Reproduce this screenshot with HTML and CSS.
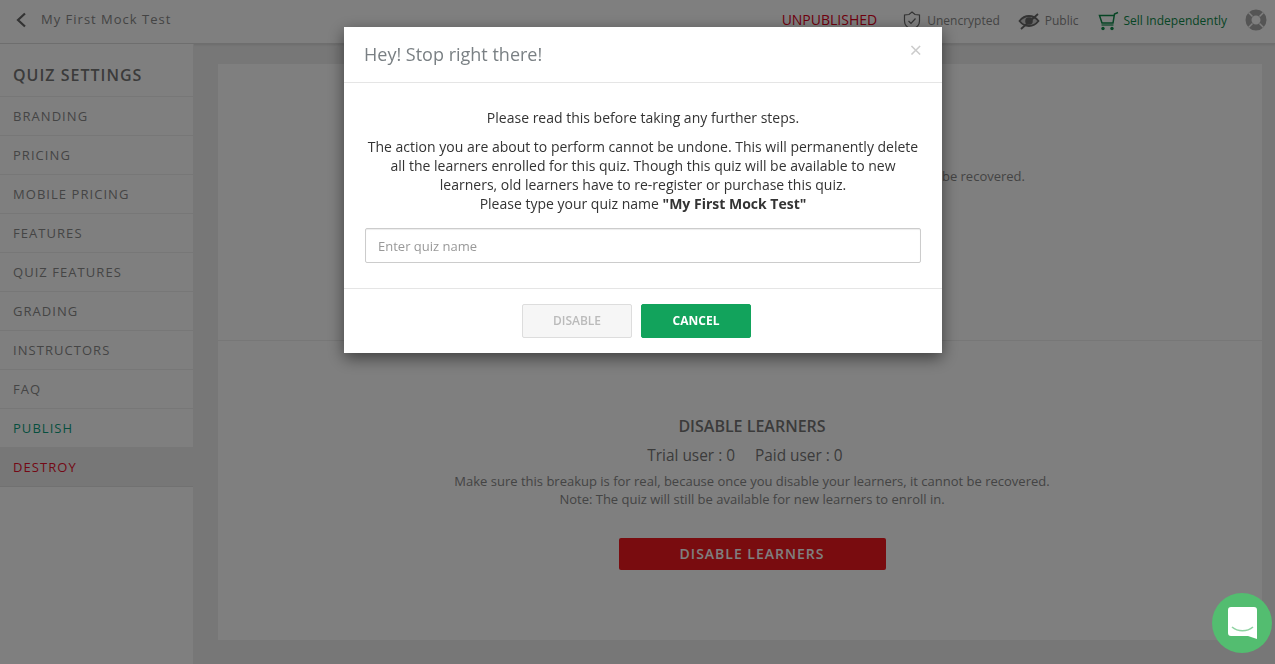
FILE: index.html
```html
<!DOCTYPE html>
<html lang="en">
<head>
  <meta charset="UTF-8" />
  <title>My First Mock Test</title>
  <link rel="stylesheet" href="styles.css">
</head>
<body>

  <header class="topbar">
    <svg class="back-icon" width="12" height="16" viewBox="0 0 12 16"><path d="M10 1.500 3 8l7 6.500" fill="none" stroke="#666" stroke-width="2.200"/></svg>
    <span class="quiz-title">My First Mock Test</span>
    <div class="top-actions">
      <span class="status">UNPUBLISHED</span>
      <span class="top-item top-item-first">
        <svg width="20" height="20" viewBox="0 0 20 20"><path d="M10 1 13 3.500 17.500 4v6c0 4-3.200 7-7.500 8.500C5.700 17 2.500 14 2.500 10V4L7 3.500z" fill="none" stroke="#666" stroke-width="1.200"/><path d="M6.500 10l2.500 2.500 4.500-5" fill="none" stroke="#666" stroke-width="1.200"/></svg>
        Unencrypted
      </span>
      <span class="top-item">
        <svg width="22" height="18" viewBox="0 0 22 18"><path d="M1.500 9c3-3.800 5.800-5 9.500-5s6.500 1.200 9.500 5c-3 3.800-5.800 5-9.500 5s-6.500-1.200-9.500-5z" fill="#ccc" stroke="#666" stroke-width="1.800"/><circle cx="11" cy="9" r="3.800" fill="#666"/><path d="M3 17 20 2" stroke="#666" stroke-width="1.800"/></svg>
        Public
      </span>
      <span class="top-item top-item-green">
        <svg width="22" height="20" viewBox="0 0 22 20"><path d="M21 1.500 17.500 3 16 12H5L2.500 4.500H17" fill="none" stroke="#0e8a4a" stroke-width="1.500"/><path d="M4.500 14h12" stroke="#0e8a4a" stroke-width="1.200"/><circle cx="6" cy="17.500" r="1.700" fill="#0e8a4a"/><circle cx="15" cy="17.500" r="1.700" fill="#0e8a4a"/></svg>
        Sell Independently
      </span>
      <svg class="help-icon" width="22" height="22" viewBox="0 0 22 22"><circle cx="11" cy="11" r="7.500" fill="none" stroke="#aaa" stroke-width="6"/><path d="M3.500 3.500l4 4M18.500 3.500l-4 4M3.500 18.500l4-4M18.500 18.500l-4-4" stroke="#fff" stroke-width="1.500"/></svg>
    </div>
  </header>

  <div class="page">
    <aside class="sidebar">
      <h2>QUIZ SETTINGS</h2>
      <a class="side-link">BRANDING</a>
      <a class="side-link">PRICING</a>
      <a class="side-link">MOBILE PRICING</a>
      <a class="side-link">FEATURES</a>
      <a class="side-link">QUIZ FEATURES</a>
      <a class="side-link">GRADING</a>
      <a class="side-link">INSTRUCTORS</a>
      <a class="side-link">FAQ</a>
      <a class="side-link side-publish">PUBLISH</a>
      <a class="side-link side-destroy">DESTROY</a>
    </aside>

    <main class="content">
      <div class="card">
        <section class="danger-section danger-top">
          <p class="danger-note">be recovered.</p>
        </section>
        <section class="danger-section danger-bottom">
          <h3>DISABLE LEARNERS</h3>
          <p class="user-counts"><span>Trial user : 0</span><span>Paid user : 0</span></p>
          <p class="danger-note">Make sure this breakup is for real, because once you disable your learners, it cannot be recovered.<br>Note: The quiz will still be available for new learners to enroll in.</p>
          <button class="btn-danger">DISABLE LEARNERS</button>
        </section>
      </div>
    </main>
  </div>

  <div class="overlay"></div>

  <div class="modal">
    <div class="modal-header">
      <h4>Hey! Stop right there!</h4>
      <span class="modal-close">&times;</span>
    </div>
    <div class="modal-body">
      <p class="modal-lead">Please read this before taking any further steps.</p>
      <p class="modal-text">The action you are about to perform cannot be undone. This will permanently delete all the learners enrolled for this quiz. Though this quiz will be available to new learners, old learners have to re-register or purchase this quiz.<br>Please type your quiz name <b>"My First Mock Test"</b></p>
      <input class="modal-input" type="text" placeholder="Enter quiz name">
    </div>
    <div class="modal-footer">
      <button class="btn btn-disabled">DISABLE</button>
      <button class="btn btn-cancel">CANCEL</button>
    </div>
  </div>

  <div class="chat-bubble">
    <svg width="29" height="32" viewBox="0 0 29 32"><path d="M3 0h23a3 3 0 0 1 3 3v29l-9-3H3a3 3 0 0 1-3-3V3a3 3 0 0 1 3-3z" fill="#fff"/><path d="M4 20c6 5 15 5 21 0" fill="none" stroke="#8fd3a2" stroke-width="1.600"/></svg>
  </div>

</body>
</html>
```

FILE: styles.css
```css
* {
  box-sizing: border-box;
}

html, body {
  height: 100%;
}

body {
  margin: 0;
  font-family: 'Open Sans', sans-serif;
  background: #eee;
  color: #333;
  overflow: hidden;
}

.topbar {
  height: 44px;
  background: #fff;
  border-bottom: 1px solid #ddd;
  box-shadow: 0 1px 2px rgba(0,0,0,0.1);
  display: flex;
  align-items: center;
  padding: 0 8px 4px 15px;
}

.back-icon {
  margin-right: 14px;
}

.quiz-title {
  font-size: 13px;
  letter-spacing: 1px;
  color: #888;
  margin-bottom: 2px;
}

.top-actions {
  margin-left: auto;
  display: flex;
  align-items: center;
}

.status {
  font-size: 14px;
  color: #e0001b;
}

.top-item {
  display: flex;
  align-items: center;
  gap: 5px;
  font-size: 12px;
  color: #888;
  margin: 2px 0 0 18px;
}

.top-item-first {
  margin-left: 25px;
}

.top-item-green {
  color: #0e8a4a;
}

.help-icon {
  margin-left: 18px;
}

.page {
  display: flex;
  height: calc(100% - 44px);
}

.sidebar {
  width: 194px;
  flex-shrink: 0;
  background: #fff;
  border-right: 1px solid #eee;
}

.sidebar h2 {
  margin: 0;
  height: 53px;
  padding: 21px 13px 0;
  font-size: 16px;
  line-height: 20px;
  font-weight: 600;
  letter-spacing: 1px;
  color: #777;
  border-bottom: 1px solid #eee;
}

.side-link {
  display: block;
  height: 39px;
  padding: 0 13px;
  font-size: 13px;
  line-height: 38px;
  letter-spacing: 1.050px;
  color: #8a8a8a;
  border-bottom: 1px solid #eee;
}

.side-publish {
  color: #0d9f7e;
}

.side-destroy {
  color: #e8112d;
  background: #eee;
  border-bottom-color: #e2e2e2;
}

.content {
  flex: 1;
  padding: 20px 13px 24px 24px;
}

.card {
  background: #fff;
  height: 576px;
}

.danger-section {
  text-align: center;
  padding-left: 24px;
}

.danger-section h3 {
  margin: 0;
  font-size: 16px;
  line-height: 22px;
  font-weight: 600;
  color: #777;
}

.danger-top {
  height: 277px;
  padding: 103px 237px 0 0;
  text-align: right;
  border-bottom: 1px solid #eee;
}

.danger-bottom {
  padding-top: 74px;
}

.user-counts {
  margin: 8px 0 5px;
  padding-right: 14px;
  font-size: 15.400px;
  line-height: 22px;
  color: #777;
  display: flex;
  justify-content: center;
  gap: 20px;
}

.danger-note {
  margin: 0;
  font-size: 13px;
  line-height: 18px;
  color: #888;
}

.btn-danger {
  display: block;
  width: 267px;
  height: 32px;
  margin: 30px auto 0;
  padding: 0 0 2px;
  border: none;
  border-radius: 2px;
  background: #f3181f;
  color: #fff;
  font-family: inherit;
  font-size: 14px;
  font-weight: 600;
  letter-spacing: 1px;
}

.overlay {
  position: fixed;
  top: 0;
  left: 0;
  width: 100%;
  height: 100%;
  background: rgba(0,0,0,0.5);
}

.modal {
  position: fixed;
  top: 27px;
  left: 344px;
  width: 598px;
  height: 326px;
  background: #fff;
  box-shadow: 0 5px 15px rgba(0,0,0,0.5);
}

.modal-header {
  height: 56px;
  padding: 0 20px 2px;
  border-bottom: 1px solid #e5e5e5;
  display: flex;
  align-items: center;
  justify-content: space-between;
}

.modal-header h4 {
  margin: 0;
  font-size: 18px;
  font-weight: 400;
  color: #7a8084;
}

.modal-close {
  font-size: 22px;
  line-height: 22px;
  font-weight: 400;
  color: #ccc;
  margin: 0 0 10px 0;
}

.modal-body {
  height: 206px;
  padding: 25px 21px 0;
  text-align: center;
  font-size: 14px;
  line-height: 19px;
  border-bottom: 1px solid #e5e5e5;
}

.modal-lead {
  margin: 0 0 10px;
}

.modal-text {
  margin: 0 0 15px;
}

.modal-input {
  display: block;
  width: 100%;
  height: 35px;
  padding: 0 12px;
  border: 1px solid #ccc;
  border-radius: 2px;
  font-family: inherit;
  font-size: 13px;
  box-shadow: inset 0 1px 1px rgba(0,0,0,0.075);
}

.modal-input::placeholder {
  color: #999;
}

.modal-footer {
  display: flex;
  justify-content: center;
  gap: 9px;
  padding: 15px 13px 0 0;
}

.btn {
  width: 110px;
  height: 34px;
  padding: 0 0 2px;
  border-radius: 2px;
  font-family: inherit;
  font-size: 12px;
  font-weight: 600;
}

.btn-disabled {
  background: #f6f6f6;
  border: 1px solid #ddd;
  color: #bbb;
}

.btn-cancel {
  background: #12a35c;
  border: 1px solid #12a35c;
  color: #fff;
  font-weight: 700;
}

.chat-bubble {
  position: fixed;
  right: 3px;
  bottom: 11px;
  width: 60px;
  height: 60px;
  border-radius: 50%;
  background: #53bd70;
  display: flex;
  align-items: center;
  justify-content: center;
}
```
